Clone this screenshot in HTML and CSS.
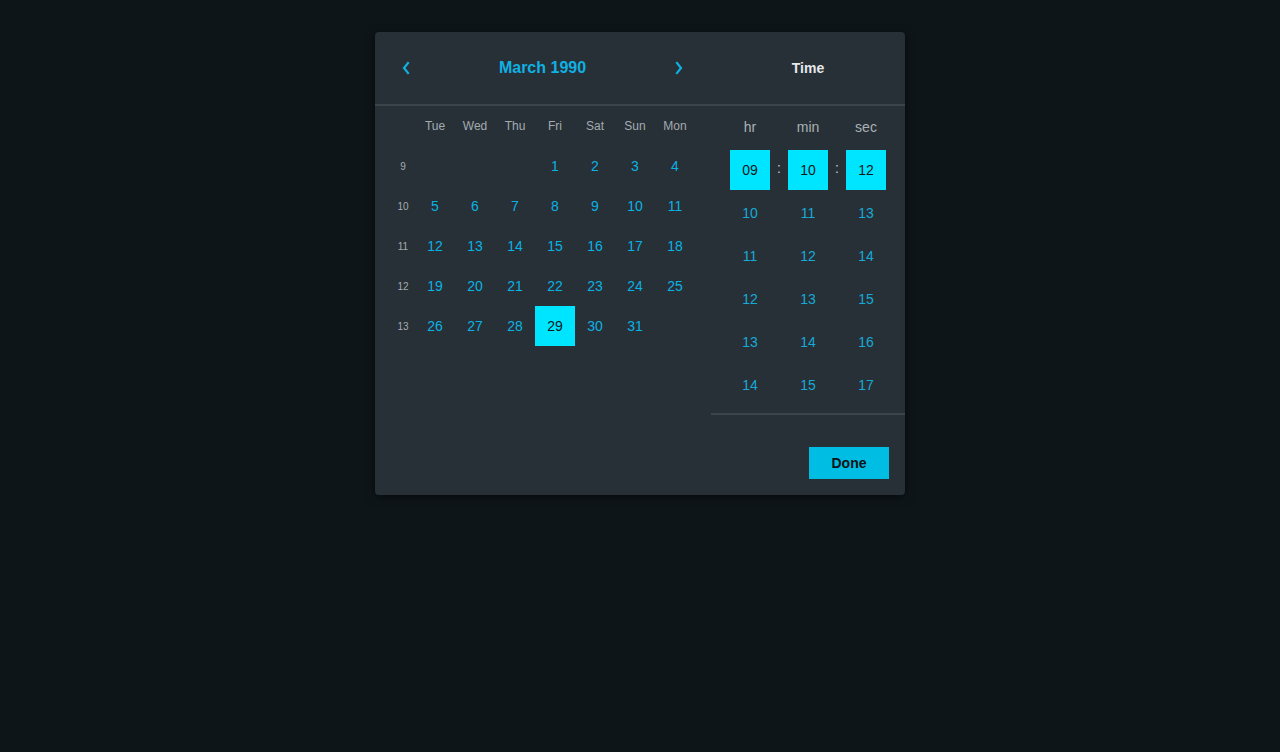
FILE: index.html
```html
<!DOCTYPE html>
<html lang="en">
<head>
<meta charset="utf-8">
<title>Date time picker</title>
<link rel="stylesheet" href="styles.css">
</head>
<body>
<div class="picker">
  <div class="header">
    <div class="cal-head">
      <button class="nav" aria-label="Previous month">
        <svg width="10" height="14" viewBox="0 0 10 14"><path d="M7 2 L3 7 L7 12" fill="none" stroke="currentColor" stroke-width="2.2" stroke-linecap="square"/></svg>
      </button>
      <div class="title">March 1990</div>
      <button class="nav" aria-label="Next month">
        <svg width="10" height="14" viewBox="0 0 10 14"><path d="M3 2 L7 7 L3 12" fill="none" stroke="currentColor" stroke-width="2.2" stroke-linecap="square"/></svg>
      </button>
    </div>
    <div class="time-head">Time</div>
  </div>
  <div class="body">
    <div class="calendar">
      <div class="wk"></div>
      <div class="dow">Tue</div><div class="dow">Wed</div><div class="dow">Thu</div><div class="dow">Fri</div><div class="dow">Sat</div><div class="dow">Sun</div><div class="dow">Mon</div>

      <div class="wk">9</div>
      <div></div><div></div><div></div>
      <div class="day">1</div><div class="day">2</div><div class="day">3</div><div class="day">4</div>

      <div class="wk">10</div>
      <div class="day">5</div><div class="day">6</div><div class="day">7</div><div class="day">8</div><div class="day">9</div><div class="day">10</div><div class="day">11</div>

      <div class="wk">11</div>
      <div class="day">12</div><div class="day">13</div><div class="day">14</div><div class="day">15</div><div class="day">16</div><div class="day">17</div><div class="day">18</div>

      <div class="wk">12</div>
      <div class="day">19</div><div class="day">20</div><div class="day">21</div><div class="day">22</div><div class="day">23</div><div class="day">24</div><div class="day">25</div>

      <div class="wk">13</div>
      <div class="day">26</div><div class="day">27</div><div class="day">28</div><div class="day selected">29</div><div class="day">30</div><div class="day">31</div><div></div>
    </div>
    <div class="time">
      <div class="tlabel">hr</div><div></div><div class="tlabel">min</div><div></div><div class="tlabel">sec</div>

      <div class="tcell selected">09</div><div class="colon">:</div><div class="tcell selected">10</div><div class="colon">:</div><div class="tcell selected">12</div>
      <div class="tcell">10</div><div></div><div class="tcell">11</div><div></div><div class="tcell">13</div>
      <div class="tcell">11</div><div></div><div class="tcell">12</div><div></div><div class="tcell">14</div>
      <div class="tcell">12</div><div></div><div class="tcell">13</div><div></div><div class="tcell">15</div>
      <div class="tcell">13</div><div></div><div class="tcell">14</div><div></div><div class="tcell">16</div>
      <div class="tcell">14</div><div></div><div class="tcell">15</div><div></div><div class="tcell">17</div>
    </div>
  </div>
  <div class="footer">
    <button class="done">Done</button>
  </div>
</div>
</body>
</html>
```

FILE: styles.css
```css
html, body {
  margin: 0;
  padding: 0;
}
body {
  background: #0e1518;
  font-family: "Liberation Sans", Arial, sans-serif;
  height: 752px;
  display: flex;
  justify-content: center;
  align-items: flex-start;
}
.picker {
  margin-top: 32px;
  width: 530px;
  background: #283037;
  border-radius: 4px;
  box-shadow: 0 2px 10px rgba(0, 0, 0, 0.55);
}
.header {
  display: flex;
  height: 72px;
  border-bottom: 2px solid #3a4449;
}
.cal-head {
  width: 336px;
  box-sizing: border-box;
  padding: 0 16px 0 15px;
  display: flex;
  align-items: center;
}
.nav {
  width: 32px;
  height: 32px;
  background: none;
  border: none;
  padding: 0;
  color: #0fb0e2;
  display: flex;
  align-items: center;
  justify-content: center;
  cursor: pointer;
}
.title {
  flex: 1;
  text-align: center;
  color: #0fb0e2;
  font-size: 16px;
  font-weight: bold;
}
.time-head {
  width: 194px;
  display: flex;
  align-items: center;
  justify-content: center;
  color: #e6e8ea;
  font-size: 14px;
  font-weight: bold;
}
.body {
  display: flex;
  align-items: flex-start;
}
.calendar {
  width: 336px;
  box-sizing: border-box;
  padding: 0 16px;
  display: grid;
  grid-template-columns: 24px repeat(7, 40px);
  grid-auto-rows: 40px;
}
.calendar > div {
  display: flex;
  align-items: center;
  justify-content: center;
}
.dow {
  color: #a3abb0;
  font-size: 12px;
}
.wk {
  color: #a3abb0;
  font-size: 10px;
}
.day {
  color: #0ab2e4;
  font-size: 14px;
}
.day.selected, .tcell.selected {
  background: #00e5ff;
  color: #111619;
}
.time {
  width: 194px;
  box-sizing: border-box;
  padding: 0 19px 8px;
  margin-bottom: 16px;
  border-bottom: 2px solid #3a4449;
  display: grid;
  grid-template-columns: 40px 18px 40px 18px 40px;
  grid-template-rows: 41px repeat(6, 40px);
  row-gap: 3px;
}
.time > div {
  display: flex;
  align-items: center;
  justify-content: center;
}
.tlabel {
  color: #a8b0b4;
  font-size: 14px;
}
.tcell {
  color: #16aad6;
  font-size: 14px;
}
.colon {
  color: #c4c8cb;
  font-size: 14px;
  padding-bottom: 4px;
}
.footer {
  height: 64px;
  display: flex;
  justify-content: flex-end;
  align-items: center;
  padding: 0 16px;
}
.done {
  width: 80px;
  height: 32px;
  border: none;
  background: #00bde4;
  color: #0d1317;
  font-family: "Liberation Sans", Arial, sans-serif;
  font-size: 14px;
  font-weight: bold;
  cursor: pointer;
}
```
